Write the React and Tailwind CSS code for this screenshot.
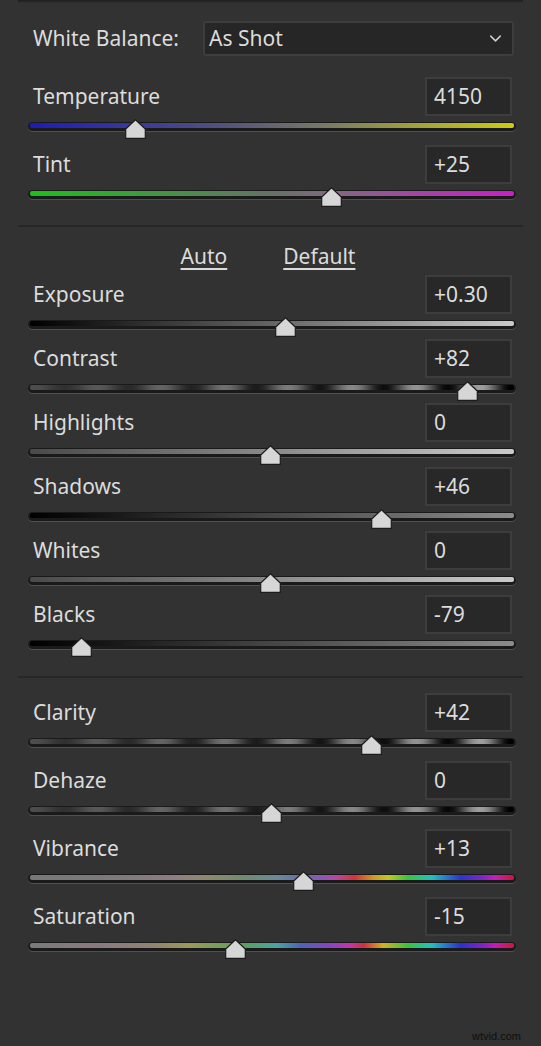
import { ChevronDown } from "lucide-react";

const gray = (v) => {
  const c = Math.max(0, Math.min(255, Math.round(v)));
  return `rgb(${c},${c},${c})`;
};

// banded pattern used by contrast / clarity / dehaze
const bandStops = () => {
  const out = [];
  for (let i = 0; i <= 96; i++) {
    const t = i / 96;
    const mid = 64 + 18 * t;
    const amp = 12 + 72 * t;
    out.push([t, gray(mid + amp * Math.cos(2 * Math.PI * (t - 0.005) / 0.132))]);
  }
  return out;
};

const spectrum = [
  [0.0, "#787878"],
  [0.2, "#7e7a7c"],
  [0.29, "#8e7c84"],
  [0.37, "#8c8a6c"],
  [0.44, "#6f8c70"],
  [0.51, "#6a8a98"],
  [0.56, "#6470a8"],
  [0.6, "#8a58b4"],
  [0.63, "#b44aa4"],
  [0.67, "#d0343c"],
  [0.71, "#d09a24"],
  [0.74, "#c4c820"],
  [0.78, "#3cc43c"],
  [0.83, "#22c0c0"],
  [0.89, "#2c34d0"],
  [0.94, "#8a24c8"],
  [0.96, "#c420b8"],
  [1.0, "#d0143c"],
];

const saturation = [
  [0.0, "#7a7a7a"],
  [0.15, "#8a7a80"],
  [0.25, "#8e8470"],
  [0.33, "#9a9a5a"],
  [0.44, "#5aa05a"],
  [0.51, "#4ca2a4"],
  [0.56, "#4c64b4"],
  [0.62, "#8a44c0"],
  [0.66, "#c038a8"],
  [0.69, "#d03040"],
  [0.73, "#d0b420"],
  [0.78, "#3cc43c"],
  [0.83, "#20c0c0"],
  [0.89, "#2c30d0"],
  [0.94, "#8c20c8"],
  [0.96, "#c41cb8"],
  [1.0, "#d0143c"],
];

const groups = [
  [
    { label: "Temperature", value: "4150", thumb: 135, stops: [[0, "#1c1cb8"], [0.4, "#52527e"], [0.6, "#777766"], [1, "#cccc10"]] },
    { label: "Tint", value: "+25", thumb: 331, stops: [[0, "#1ebe1e"], [0.5, "#667066"], [0.62, "#806a80"], [1, "#c81ec8"]] },
  ],
  [
    { label: "Exposure", value: "+0.30", thumb: 285, stops: [[0, "#000000"], [1, "#cacaca"]] },
    { label: "Contrast", value: "+82", thumb: 467, stops: bandStops() },
    { label: "Highlights", value: "0", thumb: 270, stops: [[0, "#4a4a4a"], [1, "#cacaca"]] },
    { label: "Shadows", value: "+46", thumb: 381, stops: [[0, "#000000"], [1, "#8c8c8c"]] },
    { label: "Whites", value: "0", thumb: 270, stops: [[0, "#4a4a4a"], [1, "#cacaca"]] },
    { label: "Blacks", value: "-79", thumb: 81, stops: [[0, "#000000"], [1, "#8c8c8c"]] },
  ],
  [
    { label: "Clarity", value: "+42", thumb: 371, stops: bandStops() },
    { label: "Dehaze", value: "0", thumb: 271, stops: bandStops() },
    { label: "Vibrance", value: "+13", thumb: 303, stops: spectrum },
    { label: "Saturation", value: "-15", thumb: 235, stops: saturation },
  ],
];

const Thumb = ({ x }) => (
  <svg width="21" height="20" viewBox="0 0 21 20" className="absolute top-[-3px]" style={{ left: x - 10.5 - 28 }}>
    <path d="M10.5 0.7 L20.3 10 V19.3 H0.7 V10 Z" fill="#d6d6d6" stroke="#1c1c1c" strokeWidth="1.2" />
  </svg>
);

const Slider = ({ id, label, value, thumb, stops, gap }) => (
  <div className={`flex flex-col ${gap}`}>
    <div className="ml-[33px] mr-[29px] flex h-[39px] items-center justify-between">
      <span className="text-[21px] text-[#dcdcdc]">{label}</span>
      <div className="flex h-[39px] w-[87px] items-center border-2 border-[#3d3d3d] bg-[#282828] pl-[7px] text-[21px] text-[#dcdcdc]">
        {value}
      </div>
    </div>
    <div className="relative ml-[28px] mt-[6px] h-[9px] w-[488px] rounded-full bg-[#1a1a1a] px-[2px] pt-[1px] shadow-[0_1px_0_#505050]">
      <svg width="484" height="5" className="block">
        <defs>
          <linearGradient id={id} x1="0" x2="1" y1="0" y2="0">
            {stops.map(([o, c], i) => (
              <stop key={i} offset={o} stopColor={c} />
            ))}
          </linearGradient>
        </defs>
        <rect width="484" height="5" rx="2" fill={`url(#${id})`} />
      </svg>
      <Thumb x={thumb} />
    </div>
  </div>
);

const Divider = ({ className }) => <div className={`mx-[18px] h-[2px] shrink-0 bg-[#262626] ${className}`} />;

export default function App() {
  return (
    <div className="relative flex h-[1046px] w-[541px] flex-col overflow-hidden bg-[#323232] font-['Noto_Sans','Open_Sans',sans-serif]">
      <div className="mx-[18px] h-[3px] shrink-0 bg-gradient-to-b from-[#1e1e1e] to-[#303030]" />

      <div className="ml-[33px] mr-[27px] mt-[18px] flex h-[35px] shrink-0 items-center">
        <span className="w-[170px] text-[21px] text-[#dcdcdc]">White Balance:</span>
        <div className="flex h-[35px] flex-1 items-center justify-between rounded-[3px] border-2 border-[#3d3d3d] bg-[#262626] pl-[4px] pr-[7px]">
          <span className="text-[21px] text-[#dcdcdc]">As Shot</span>
          <ChevronDown size={19} strokeWidth={1.8} color="#d0d0d0" />
        </div>
      </div>

      <div className="mt-[21px] flex flex-col">
        {groups[0].map((s, i) => (
          <Slider key={s.label} id={`g0-${i}`} {...s} gap="mb-[14px]" />
        ))}
      </div>

      <Divider className="mt-[12px]" />

      <div className="mt-[16px] flex h-[28px] shrink-0 items-center justify-center gap-[56px] pr-[5px] text-[21px] text-[#dcdcdc]">
        <span className="underline underline-offset-[4px]">Auto</span>
        <span className="underline underline-offset-[4px]">Default</span>
      </div>

      <div className="mt-[4px] flex flex-col">
        {groups[1].map((s, i) => (
          <Slider key={s.label} id={`g1-${i}`} {...s} gap="mb-[10px]" />
        ))}
      </div>

      <Divider className="mt-[17px]" />

      <div className="mt-[15px] flex flex-col">
        {groups[2].map((s, i) => (
          <Slider key={s.label} id={`g2-${i}`} {...s} gap="mb-[14px]" />
        ))}
      </div>

      <span className="absolute bottom-[2px] right-[20px] font-['Liberation_Sans',sans-serif] text-[11px] text-[#0e0e0e]">wtvid.com</span>
    </div>
  );
}
